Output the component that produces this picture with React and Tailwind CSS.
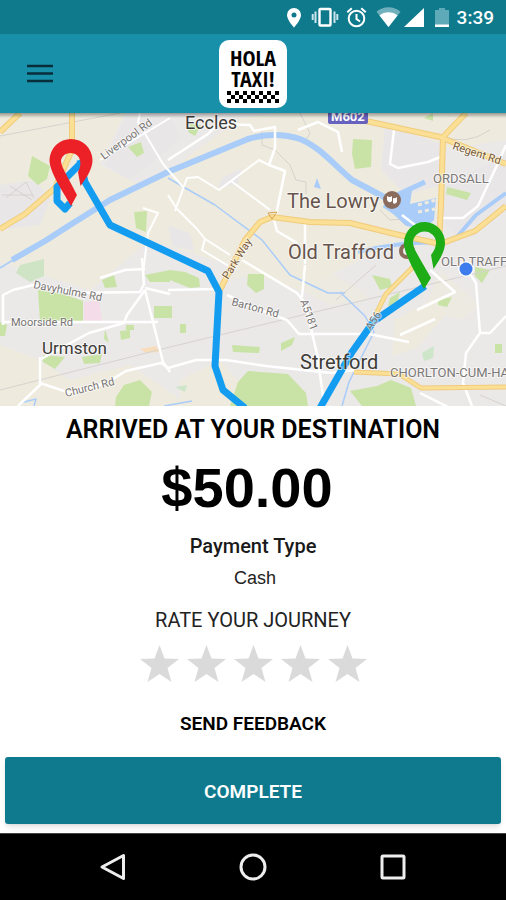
import { useState } from "react";

function StatusBar() {
  return (
    <div className="flex h-[34px] items-center justify-end bg-[#107a8d] pr-3 text-white">
      <svg viewBox="283 0 172 34" className="h-[34px] w-[172px]" aria-hidden="true">
        <path fill="#fff" fillRule="evenodd" d="M292 8a7 7 0 0 0-7 7c0 5 7 12.500 7 12.500s7-7.500 7-12.500a7 7 0 0 0-7-7Zm0 4.500a2.500 2.500 0 1 1 0 5 2.500 2.500 0 0 1 0-5Z" />
        <rect x="317.500" y="9" width="11" height="16.500" rx="1" fill="none" stroke="#fff" strokeWidth="2.400" />
        <path d="M313.500 11.500v11.500M332.500 11.500v11.500M310.700 14v6M335.300 14v6" stroke="#cbe5ea" strokeWidth="2" />
        <circle cx="354.500" cy="18.500" r="7.800" fill="none" stroke="#fff" strokeWidth="2" />
        <path d="M354.500 14v5l3.500 2.500M345.300 12.300l4.500-4M363.700 12.300l-4.500-4" fill="none" stroke="#fff" strokeWidth="2" />
        <path d="M374.500 11.800a18 18 0 0 1 24 0L386.500 27Z" fill="#70b0bc" />
        <path d="M377.500 15.600a14 14 0 0 1 18 0L386.500 27Z" fill="#fff" />
        <path d="M422 8v19h-20Z" fill="#fff" />
        <path d="M433 10h4V8h6v2h4v15h-14Z" fill="#5faab8" />
        <path d="M433 24.500h14V27h-14Z" fill="#fff" />
      </svg>
      <span className="text-[19px] leading-none font-medium">3:39</span>
    </div>
  );
}

function Logo() {
  const cells = [];
  for (let row = 0; row < 3; row++) {
    for (let col = 0; col < 13; col++) {
      if ((row + col) % 2 === 0) {
        cells.push(<rect key={row + "-" + col} x={col * 4} y={row * 4} width="4" height="4" />);
      }
    }
  }
  return (
    <div className="flex h-[68px] w-[68px] flex-col items-center rounded-[10px] bg-white pt-[7px] font-['Open_Sans_Condensed','Roboto_Condensed','Liberation_Sans_Narrow','Liberation_Sans',sans-serif] text-[22px] leading-[21px] font-bold text-black">
      <span>HOLA</span>
      <span>TAXI!</span>
      <svg viewBox="0 0 52 12" className="mt-[2px] h-3 w-[52px]" aria-hidden="true">{cells}</svg>
    </div>
  );
}

function RouteMap() {
  return (
    <svg viewBox="0 113 506 293" preserveAspectRatio="xMidYMid slice" className="block w-full font-[Roboto,sans-serif]" role="img" aria-label="Route map">
      <defs>
        <linearGradient id="shade" x1="0" y1="0" x2="0" y2="1">
          <stop offset="0" stopColor="#000" stopOpacity="0.350" />
          <stop offset="1" stopColor="#000" stopOpacity="0" />
        </linearGradient>
      </defs>
      <rect y="113" width="506" height="293" fill="#ebe8e8" />
      {/* built-up and open land */}
      <g fill="#eeebde">
        <path d="M0 113H125L100 165 140 185 170 170 240 118 280 113H506V140L440 150 438 215 400 240 340 270 300 290 220 262 150 240 90 290 0 262Z" />
        <path d="M395 320l40-22 12 15-30 35-25 8ZM0 345l40 15 30 20 60-15 60 41H0ZM180 380l40-20 40 46h-80Z" />
        <path d="M225 250l75 5 60 35 10 10-40 5-60-30-40 5ZM440 270l40 35-20 15-35-10Z" opacity=".7" />
      </g>
      <g fill="#e9e6e8">
        <path d="M125 118l42-5 15 25-52 42-25-15ZM0 185l35-5 15 20-10 25-40 5ZM222 178l20-10-4 16-20 3ZM168 225l22 8 4 18-22-5Z" />
        <path d="M385 125l60 20-4 40-35 10-25-25ZM445 185l61-30v50l-50 30-15-18Z" />
      </g>
      {/* parks */}
      <g fill="#c9e3a6">
        <path d="M32 156l18 10-3 13-9 6-10-9ZM128 147l13-5 3 11-7 4ZM190 124l11 1-6 11-7-4ZM353 139l19 1-1 27-16 2-3-15ZM447 187l24 6-4 7-21-6ZM134 212l13-1-1 21-10-4ZM170 270l15 2 14 6 1 9-10 1-20-8ZM248 274h16v15l-8 4-9-8ZM168 306h4v12h-4ZM180 324h6v9h-6ZM232 345l28 2-1 6-26-1ZM281 343l14-6-3 8-11 6Z" />
        <path d="M38 290l25 4 20 7v21H40ZM102 280l12-5 3 12-12 1ZM145 275l25-5v12h-20ZM154 306h16v12h-16ZM120 331l10-1v8l-9 2ZM126 325h8v5h-8ZM105 329l4 14-5-4ZM43 355l22 2-10 12-12-7ZM82 357l20-3-2 9-16 1ZM116 397l8-12 16-5 12 12-3 14h-34ZM0 322l7 3-2 11H0Z" />
        <path d="M238 382l10-11 40 3 18 19 2 13h-78ZM350 391l27-5 14-6 20 8 5 18h-54ZM372 275l18 4 2 8-12 3ZM390 298l10-6-3 12-9 2ZM438 300l14-3-5 10-9-2ZM495 344h7v9h-7ZM475 267l15 3-8 13-7-7ZM424 118l9-5v8Z" />
        <path d="M20 265l24-6v17l-14 6-14-9Z" fill="#cfe4c4" />
        <path d="M422 353l12-7-1 12-9 3ZM175 387l12-2-2 7Z" fill="#cde6ca" />
      </g>
      <path d="M84 302l15-1 3 21H84Z" fill="#f4dce8" />
      <path d="M140 349l16-3 5 6-15 1Z" fill="#f8ddbd" />
      {/* railways and boundaries */}
      <g fill="none" stroke="#d5d2cf">
        <path d="M0 136L120 113M0 390L170 347 340 306 506 266M262 131v14l13 5 15 15 6 15 10 2v12M300 113l10 20-6 10 14 4M336 300l40-35M380 210l10 10 30-2M2 195h32M6 198l20-16 8 16M10 186l22 14M440 135q25 12 50-5M480 395l26 11" />
      </g>
      {/* water */}
      <g fill="none" stroke="#a9ccf8" strokeLinejoin="round">
        <path d="M12 260L45 241 70 225 110 200 168 172 248 139Q275 131 300 139C320 147 334 165 352 180L386 198" strokeWidth="6" />
        <path d="M168 178L215 205 262 240 290 275 328 293H345" strokeWidth="1.500" />
        <path d="M358 252Q405 240 445 243L456 238 476 215 506 193" strokeWidth="4" />
        <path d="M384 201l41-19M384 205l24 16 19 2" strokeWidth="5" />
        <path d="M340 292l25 24 9 16-25 50-7 24M20 403l16-4-2 7M164 406l28-5M0 268l18-11" strokeWidth="1.500" />
      </g>
      <path d="M384 202l28-12-2 14 26-6-2 22-10 9-18-3-16-15ZM314 187l3-9 4 11Z" fill="#a9ccf8" />
      <path d="M418 205l18-5M418 212l17-3" stroke="#eeeadf" strokeWidth="3" strokeDasharray="4 3" />
      {/* minor roads */}
      <g fill="none" stroke="#fff" strokeWidth="2.500" strokeLinejoin="round">
        <path d="M168 160L208 134 218 124 250 125 254 131 275 127V148L269 165 285 171 276 215" />
        <path d="M175 211L187 178 198 177 219 190 231 181 270 210M219 190l40-30 10 5M140 113l-2 9 25 42 20 23M100 160l70-42M143 208l15 5-10 20-5 40M168 195l9 14 20 20 8 10 25 16M205 239l-3 11 30 18" strokeWidth="2" />
        <path d="M394 130l-4 34 8 4 30-6 15-6M440 218h23l15-12 20-43 8-18M402 215l13 10M298 130l20-8 20 10 4 20" />
        <path d="M3 325V295l10-5 20-5 40 8 67-1 4-8-2-26M3 322h155M40 357v28l-22 21M40 383l30 10 36-10 20-12 35-8 9 6M145 290l18 72 7 10M145 288l25 6M145 290l-18 25-3 8-35 10-48 26" />
        <path d="M100 278l25-8 20-1M168 290l50-1M242 260l55 33 8 10 12 51 8 55M305 265l-3 32M227 295l30 14 30 11 12 14h70l40 8M168 368l28-8h30l40 6 65 7 25-3M305 224v40M273 216l4 15 20 12" />
        <path d="M466 268l10 15 4 50-14 20-3 30 9 23M480 333h10l16-17M400 335l35-16M430 270l25 22-38 18M420 393l30 15" />
      </g>
      {/* main roads */}
      <g fill="none" strokeLinejoin="round">
        <g stroke="#f0cb7c">
          <path d="M0 229L25 214 55 188 72 150V113M0 132l20-19M220 290L245 240 260 222 272 217 310 222 350 223 395 234 440 244 475 231 506 206M366 121L440 137 506 164M443 137L466 113M443 137L441 205 439 245" strokeWidth="6" />
          <path d="M376 314l10-20 30-30M354 372l45 2 22 14 85-1" strokeWidth="5" />
        </g>
        <g stroke="#fadf94">
          <path d="M0 229L25 214 55 188 72 150V113M0 132l20-19M220 290L245 240 260 222 272 217 310 222 350 223 395 234 440 244 475 231 506 206M366 121L440 137 506 164M443 137L466 113M443 137L441 205 439 245" strokeWidth="4" />
          <path d="M376 314l10-20 30-30M354 372l45 2 22 14 85-1" strokeWidth="3" />
        </g>
      </g>
      <path d="M268 213l9-1-5 7Z" fill="none" stroke="#d6a44d" />
      {/* travelled route */}
      <g fill="none" stroke="#149df0" strokeWidth="7" strokeLinejoin="round">
        <path d="M82 162L57 187V201L65 209 70 203" />
        <path d="M80 160L85 182 110 225 208 271 219 292 215 366 223 390 245 408" />
        <path d="M425 286L374 321 352 352 320 408" />
      </g>
      {/* labels */}
      <g stroke="#fff" strokeOpacity=".6" strokeWidth="2" strokeLinejoin="round" className="[paint-order:stroke]">
        <g fill="#3d3b36">
          <text x="185" y="129" fontSize="18">Eccles</text>
          <text x="42" y="354" fontSize="17">Urmston</text>
          <text x="300" y="369" fontSize="20">Stretford</text>
        </g>
        <g fill="#66534c">
          <text x="287" y="208" fontSize="20">The Lowry</text>
          <text x="288" y="259" fontSize="20">Old Trafford</text>
        </g>
        <g fill="#7b7977" fontSize="13">
          <text x="433" y="183">ORDSALL</text>
          <text x="441" y="266">OLD TRAFF</text>
          <text x="390" y="377">CHORLTON-CUM-HA</text>
        </g>
        <g fill="#777472" fontSize="11">
          <text transform="translate(104 160) rotate(-36)">Liverpool Rd</text>
          <text transform="translate(33 288) rotate(11)">Davyhulme Rd</text>
          <text x="11" y="326">Moorside Rd</text>
          <text transform="translate(66 397) rotate(-14)">Church Rd</text>
          <text transform="translate(231 305) rotate(15)">Barton Rd</text>
          <text transform="translate(300 301) rotate(70)">A5181</text>
          <text transform="translate(371 331) rotate(-57)">A56</text>
        </g>
        <g fill="#765a3c" fontSize="11">
          <text transform="translate(228 280) rotate(-58)">Park Way</text>
          <text transform="translate(452 149) rotate(18)">Regent Rd</text>
        </g>
      </g>
      <rect x="328" y="105" width="40" height="19" rx="2" fill="#6762bd" />
      <text x="331" y="121" fontSize="13" fontWeight="700" fill="#fff">M602</text>
      <circle cx="392" cy="200" r="9" fill="#8b6b5c" />
      <path d="M387 196q3 2 5 0v5q-3 3-5-1ZM393 198q2 1 4-1v5q-2 3-4 1Z" fill="#fff" />
      <circle cx="407" cy="251" r="8" fill="#8b6b5c" />
      <circle cx="407" cy="251" r="4" fill="#eee" />
      <circle cx="466" cy="269" r="8" fill="#fff" opacity=".7" />
      <circle cx="466" cy="269" r="6.500" fill="#3d7cec" />
      {/* start and finish markers */}
      <path id="marker" fill="#ec2027" d="M71 139A21.500 21.500 0 0 1 92.500 160C92.500 168 88 176 80.500 186L78 172C80 168 81 164 80 160A10 10 0 0 0 61 160C61 165 64 170 67 176L77 195 71 206C62 190 49.500 172 49.500 160A21.500 21.500 0 0 1 71 139Z" />
      <path fill="#1dac16" d="M425 222A20.500 21 0 0 1 445 243C445 250 441 258 433.500 269L431 255C434 251 436 247 436 243A11 11 0 0 0 413 243C413 248 417 253 420 259L431 278 424 289C415 272 404 254 404 243A20.500 21 0 0 1 425 222Z" />
      <rect y="113" width="506" height="5" fill="url(#shade)" />
    </svg>
  );
}

function Rating() {
  const [rating, setRating] = useState(0);
  return (
    <fieldset className="mt-3 flex justify-center">
      <legend className="mx-auto mb-2 text-xl leading-7 text-[#222]">RATE YOUR JOURNEY</legend>
      {[1, 2, 3, 4, 5].map((n) => (
        <label key={n} className="w-[47px] cursor-pointer">
          <input type="radio" name="rating" value={n} aria-label={n + " stars"} checked={rating === n} onChange={() => setRating(n)} className="sr-only" />
          <svg viewBox="0 0 47 44" className={n <= rating ? "h-11 w-full fill-[#107a8d]" : "h-11 w-full fill-[#dadada]"} aria-hidden="true">
            <path d="M23.500 3L28.500 16.500 43 17 31.500 26 35.500 40 23.500 32 11.500 40 15.500 26 4 17 18.500 16.500Z" />
          </svg>
        </label>
      ))}
    </fieldset>
  );
}

export default function App() {
  return (
    <div className="flex min-h-screen flex-col bg-white font-[Roboto,sans-serif]">
      <StatusBar />
      <header className="grid h-[79px] grid-cols-[1fr_auto_1fr] items-center bg-[#1990a9]">
        <button type="button" aria-label="Menu" className="ml-[26px] w-7 cursor-pointer">
          <svg viewBox="0 0 28 20" className="h-5 w-7" aria-hidden="true">
            <path d="M1 2h26M1 9.500h26M1 17h26" stroke="#082e3b" strokeWidth="2.600" />
          </svg>
        </button>
        <Logo />
      </header>
      <RouteMap />
      <main className="flex flex-1 flex-col px-[5px] pb-[9px] text-center text-black">
        <h1 className="mt-2 text-[25px] leading-8 font-semibold">ARRIVED AT YOUR DESTINATION</h1>
        <p className="mt-3 pr-3 font-['Liberation_Sans',Arial,sans-serif] text-[56px] leading-[60px] font-bold">$50.00</p>
        <h2 className="mt-3 text-xl leading-8 font-medium text-[#1a1a1a]">Payment Type</h2>
        <p className="ml-1 font-['Liberation_Sans',Arial,sans-serif] text-lg leading-8 text-[#222]">Cash</p>
        <Rating />
        <button type="button" className="mx-auto mt-6 cursor-pointer px-4 text-[19px] leading-7 font-semibold">SEND FEEDBACK</button>
        <button type="button" className="mt-auto h-[67px] w-full cursor-pointer rounded-[3px] bg-[#0f7a8e] pt-1 text-[19px] font-semibold text-white shadow-md">COMPLETE</button>
      </main>
      <nav aria-label="System" className="flex h-[67px] items-center justify-center gap-[112px] border-t border-[#444] bg-black">
        <button type="button" aria-label="Back" className="w-7 cursor-pointer">
          <svg viewBox="0 0 28 28" className="h-7 w-7" aria-hidden="true">
            <path d="M24.500 2.500v23L3 14Z" fill="none" stroke="#eee" strokeWidth="3" strokeLinejoin="round" />
          </svg>
        </button>
        <button type="button" aria-label="Home" className="w-7 cursor-pointer">
          <svg viewBox="0 0 28 28" className="h-7 w-7" aria-hidden="true">
            <circle cx="14" cy="14" r="12" fill="none" stroke="#eee" strokeWidth="3" />
          </svg>
        </button>
        <button type="button" aria-label="Recent apps" className="w-7 cursor-pointer">
          <svg viewBox="0 0 28 28" className="h-7 w-7" aria-hidden="true">
            <rect x="3" y="3" width="22" height="22" rx="1" fill="none" stroke="#eee" strokeWidth="3" />
          </svg>
        </button>
      </nav>
    </div>
  );
}
